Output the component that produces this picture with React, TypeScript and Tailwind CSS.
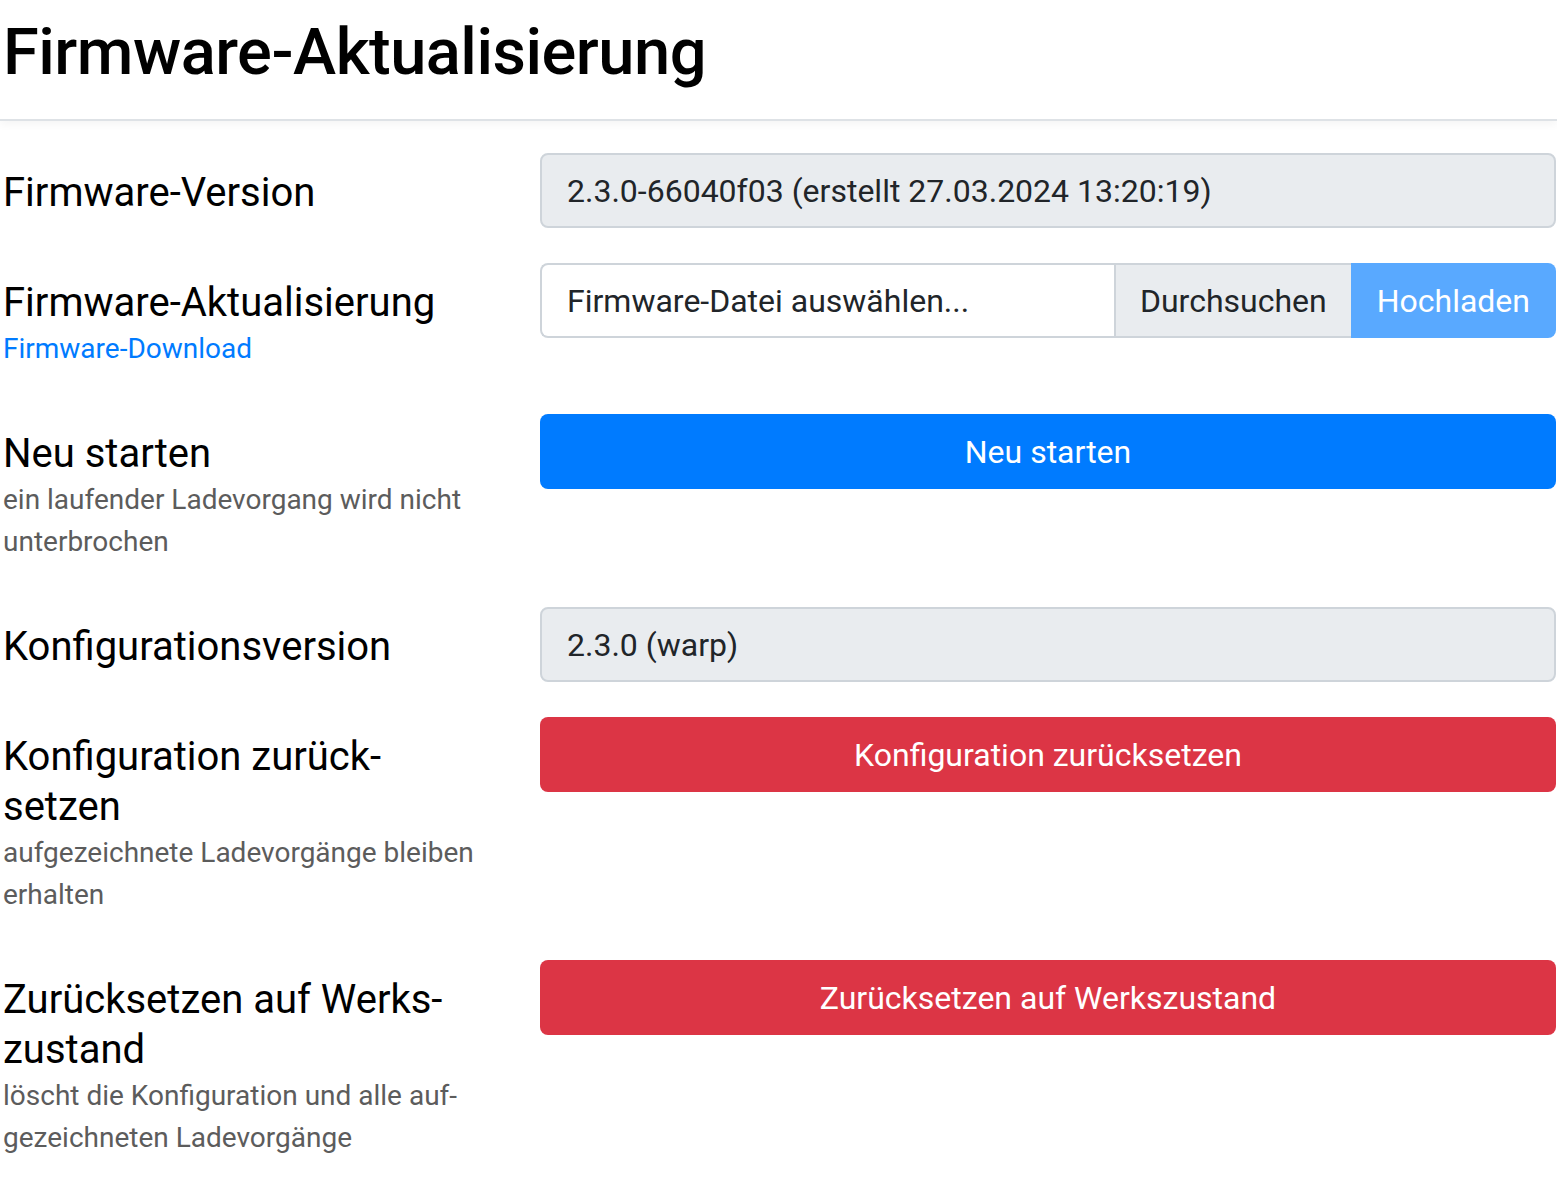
export default function App() {
  const rows: {
    label: string[];
    desc?: string[];
    link?: string;
    control: React.ReactNode;
  }[] = [
    {
      label: ["Firmware-Version"],
      control: <ReadOnly value="2.3.0-66040f03 (erstellt 27.03.2024 13:20:19)" />,
    },
    {
      label: ["Firmware-Aktualisierung"],
      link: "Firmware-Download",
      control: (
        <div className="flex h-[75px]">
          <div className="flex flex-1 items-center rounded-l-[8px] border-2 border-r-0 border-[#ced4da] bg-white px-[25px] pt-[1px]">
            Firmware-Datei auswählen...
          </div>
          <div className="flex items-center border-y-2 border-l-2 border-[#ced4da] bg-[#e9ecef] px-[24px] pt-[1px]">
            Durchsuchen
          </div>
          <button className="flex items-center rounded-r-[8px] bg-[#59a9ff] px-[26px] pt-[1px] text-white">
            Hochladen
          </button>
        </div>
      ),
    },
    {
      label: ["Neu starten"],
      desc: ["ein laufender Ladevorgang wird nicht", "unterbrochen"],
      control: <Btn color="bg-[#007bff]" text="Neu starten" />,
    },
    {
      label: ["Konfigurationsversion"],
      control: <ReadOnly value="2.3.0 (warp)" />,
    },
    {
      label: ["Konfiguration zurück-", "setzen"],
      desc: ["aufgezeichnete Ladevorgänge bleiben", "erhalten"],
      control: <Btn color="bg-[#dc3545]" text="Konfiguration zurücksetzen" />,
    },
    {
      label: ["Zurücksetzen auf Werks-", "zustand"],
      desc: ["löscht die Konfiguration und alle auf-", "gezeichneten Ladevorgänge"],
      control: <Btn color="bg-[#dc3545]" text="Zurücksetzen auf Werkszustand" />,
    },
  ];

  return (
    <div className="min-h-screen bg-white font-['Roboto',sans-serif] text-[#212529]">
      <header className="h-[121px] border-b-2 border-[#dee2e6] pl-[3px] pt-[12px] shadow-[0_4px_8px_rgba(0,0,0,0.04)]">
        <h1 className="text-[65px] font-medium leading-[80px] tracking-[-0.5px] text-black">
          Firmware-Aktualisierung
        </h1>
      </header>
      <main className="pl-[3px] pr-[1px] pt-[32px]">
        {rows.map((r, i) => (
          <div key={i} className="mb-[35px] flex">
            <div className="w-[537px] shrink-0 pb-[9px] pt-[15px]">
              {r.label.map((l) => (
                <div key={l} className="text-[40px] leading-[50px] text-black">
                  {l}
                </div>
              ))}
              {r.link && (
                <a className="block text-[28px] leading-[42px] text-[#007bff]">{r.link}</a>
              )}
              {r.desc?.map((d) => (
                <div key={d} className="text-[28px] leading-[42px] text-[#5c5c5c]">
                  {d}
                </div>
              ))}
            </div>
            <div className="flex-1 text-[32px]">{r.control}</div>
          </div>
        ))}
      </main>
    </div>
  );
}

function ReadOnly({ value }: { value: string }) {
  return (
    <div className="flex h-[75px] items-center rounded-[8px] border-2 border-[#ced4da] bg-[#e9ecef] px-[25px] pt-[1px]">
      {value}
    </div>
  );
}

function Btn({ color, text }: { color: string; text: string }) {
  return (
    <button className={`flex h-[75px] w-full items-center justify-center rounded-[8px] pt-[1px] text-white ${color}`}>
      {text}
    </button>
  );
}
